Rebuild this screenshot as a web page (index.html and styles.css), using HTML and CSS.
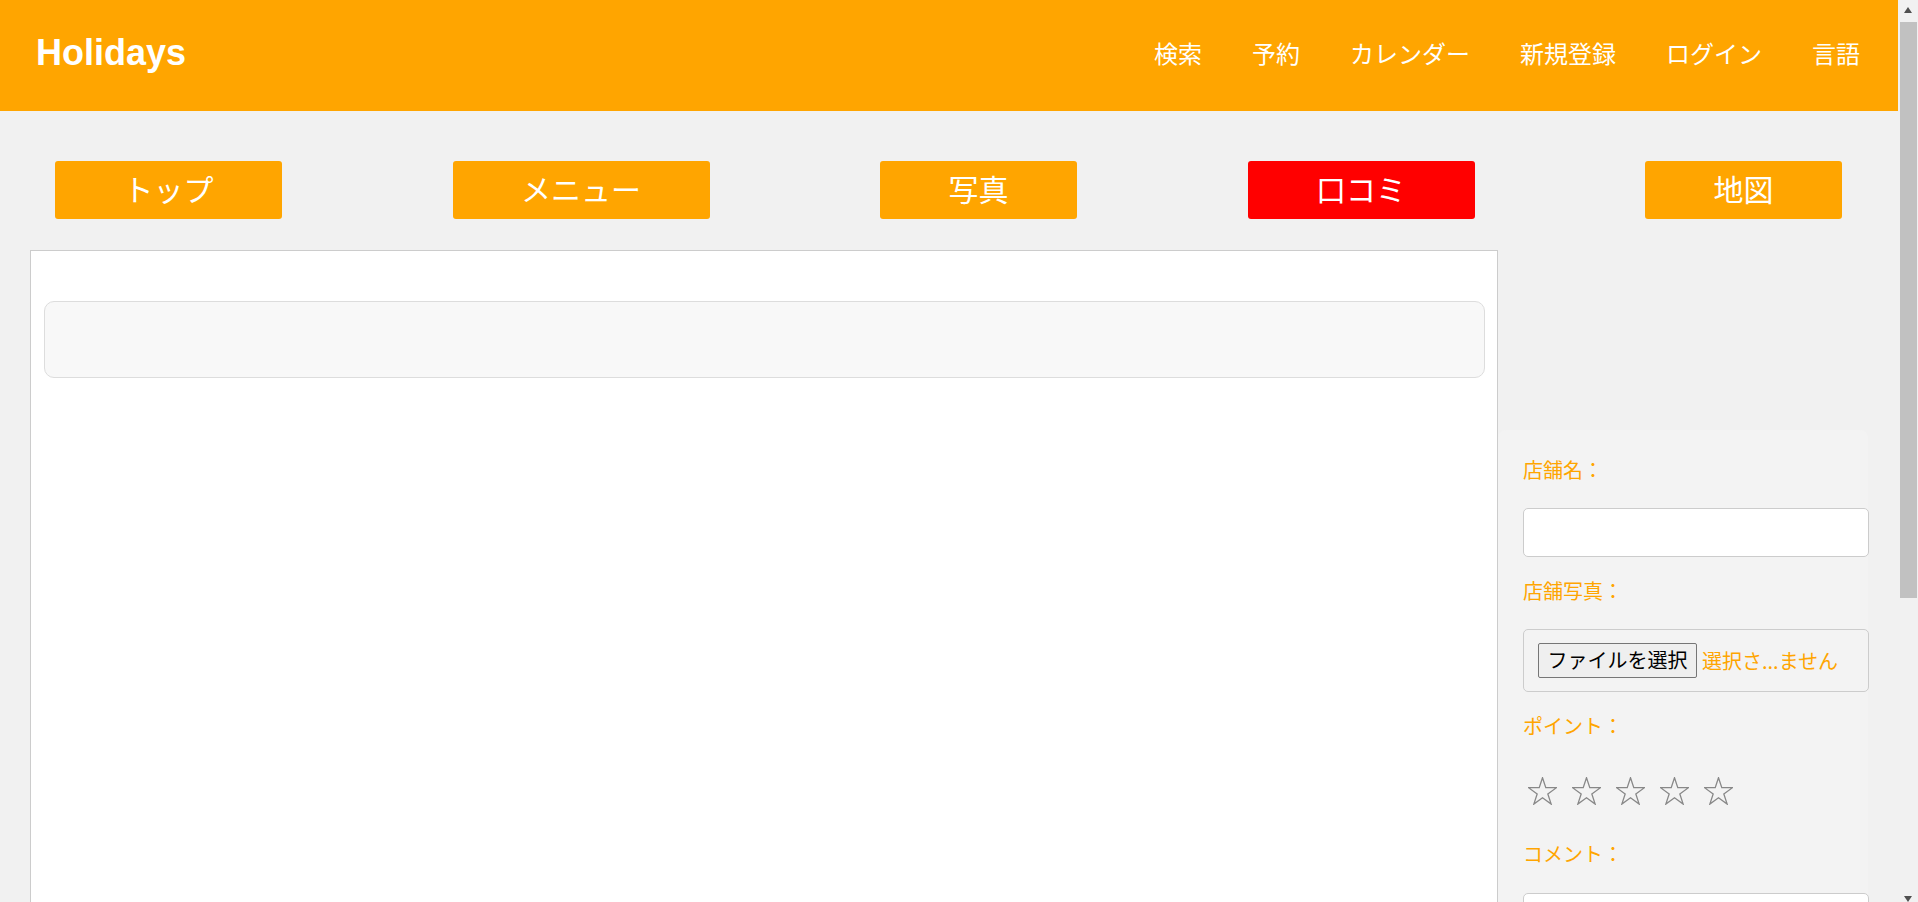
FILE: index.html
```html
<!DOCTYPE html>
<html lang="ja">
<head>
<meta charset="utf-8">
<title>Holidays</title>
<link rel="stylesheet" href="styles.css">
</head>
<body>
<div class="page">
  <header class="topbar">
    <div class="logo">Holidays</div>
    <nav class="nav">
      <a class="nav-link" href="#">検索</a>
      <a class="nav-link" href="#">予約</a>
      <a class="nav-link" href="#">カレンダー</a>
      <a class="nav-link" href="#">新規登録</a>
      <a class="nav-link" href="#">ログイン</a>
      <a class="nav-link" href="#">言語</a>
    </nav>
  </header>

  <div class="tabs">
    <a class="tab" href="#">トップ</a>
    <a class="tab" href="#">メニュー</a>
    <a class="tab" href="#">写真</a>
    <a class="tab tab-active" href="#">口コミ</a>
    <a class="tab" href="#">地図</a>
  </div>

  <div class="content">
    <main class="panel">
      <div class="search-box"></div>
    </main>
    <aside class="sidebar">
      <form class="review-form">
        <div class="label">店舗名：</div>
        <input class="text-input" type="text">
        <div class="label label-gap">店舗写真：</div>
        <div class="file-box">
          <span class="file-button">ファイルを選択</span>
          <span class="file-status">選択さ...ません</span>
        </div>
        <div class="label label-gap">ポイント：</div>
        <div class="stars">
          <svg class="star" viewBox="0 0 29 28"><polygon points="14.5,0.7 17.79,10.67 28.48,10.66 19.83,16.93 23.14,27.09 14.5,20.8 5.86,27.09 9.17,16.93 0.52,10.66 11.21,10.67"/></svg>
          <svg class="star" viewBox="0 0 29 28"><polygon points="14.5,0.7 17.79,10.67 28.48,10.66 19.83,16.93 23.14,27.09 14.5,20.8 5.86,27.09 9.17,16.93 0.52,10.66 11.21,10.67"/></svg>
          <svg class="star" viewBox="0 0 29 28"><polygon points="14.5,0.7 17.79,10.67 28.48,10.66 19.83,16.93 23.14,27.09 14.5,20.8 5.86,27.09 9.17,16.93 0.52,10.66 11.21,10.67"/></svg>
          <svg class="star" viewBox="0 0 29 28"><polygon points="14.5,0.7 17.79,10.67 28.48,10.66 19.83,16.93 23.14,27.09 14.5,20.8 5.86,27.09 9.17,16.93 0.52,10.66 11.21,10.67"/></svg>
          <svg class="star" viewBox="0 0 29 28"><polygon points="14.5,0.7 17.79,10.67 28.48,10.66 19.83,16.93 23.14,27.09 14.5,20.8 5.86,27.09 9.17,16.93 0.52,10.66 11.21,10.67"/></svg>
        </div>
        <div class="label label-comment">コメント：</div>
        <textarea class="comment"></textarea>
      </form>
    </aside>
  </div>
</div>

<div class="scrollbar">
  <div class="arrow-up"></div>
  <div class="thumb"></div>
  <div class="arrow-down"></div>
</div>
</body>
</html>
```

FILE: styles.css
```css
html, body {
  margin: 0;
  padding: 0;
  height: 902px;
  overflow: hidden;
}

body {
  background: #f1f1f1;
  font-family: "Noto Sans CJK JP", "Noto Sans", sans-serif;
}

.page {
  width: 1898px;
}

/* ---------- header ---------- */
.topbar {
  height: 111px;
  box-sizing: border-box;
  background: #ffa500;
  display: flex;
  align-items: center;
  justify-content: space-between;
  padding: 0 38px 6px 36px;
}

.logo {
  font-family: "Liberation Sans", Arial, sans-serif;
  font-weight: bold;
  font-size: 36px;
  color: #ffffff;
}

.nav {
  display: flex;
  gap: 50px;
}

.nav-link {
  color: #ffffff;
  font-size: 24px;
  text-decoration: none;
}

/* ---------- tabs ---------- */
.tabs {
  display: flex;
  gap: 170.5px;
  margin-top: 50px;
  padding-left: 55px;
}

.tab {
  display: block;
  height: 58px;
  box-sizing: border-box;
  padding: 0 68.5px 4px;
  line-height: 54px;
  font-size: 30px;
  color: #ffffff;
  background: #ffa500;
  border-radius: 3px;
  text-decoration: none;
  white-space: nowrap;
}

.tab-active {
  background: #ff0000;
}

/* ---------- content ---------- */
.content {
  display: flex;
  align-items: flex-start;
  margin-top: 31px;
  padding-left: 30px;
}

.panel {
  width: 1468px;
  height: 900px;
  box-sizing: border-box;
  background: #ffffff;
  border: 1px solid #cccccc;
  padding: 50px 12px 0 13px;
}

.search-box {
  height: 77px;
  box-sizing: border-box;
  background: #f8f8f8;
  border: 1px solid #dddddd;
  border-radius: 10px;
}

.sidebar {
  margin-top: 180px;
}

.review-form {
  width: 370px;
  height: 600px;
  box-sizing: border-box;
  background: #f3f3f3;
  border-radius: 8px;
  padding: 25px 0 0 25px;
  margin: 0;
}

.label {
  font-size: 20px;
  line-height: 30px;
  color: #ffa500;
}

.label-gap {
  margin-top: 19px;
}

.text-input {
  display: block;
  width: 346px;
  height: 49px;
  box-sizing: border-box;
  margin: 23px 0 0;
  border: 1px solid #cccccc;
  border-radius: 5px;
  background: #ffffff;
}

.file-box {
  display: flex;
  align-items: center;
  width: 346px;
  height: 63px;
  box-sizing: border-box;
  margin-top: 23px;
  padding: 0 0 0 14px;
  border: 1px solid #cccccc;
  border-radius: 5px;
}

.file-button {
  display: block;
  height: 35px;
  box-sizing: border-box;
  padding: 0 8.5px;
  line-height: 31px;
  font-size: 20px;
  color: #000000;
  background: #efefef;
  border: 1px solid #767676;
  border-radius: 2px;
  white-space: nowrap;
}

.file-status {
  margin-left: 5px;
  font-size: 20px;
  color: #ffa500;
  white-space: nowrap;
}

.stars {
  display: flex;
  gap: 15px;
  margin-top: 36px;
  padding-left: 5px;
  height: 28px;
}

.star {
  width: 29px;
  height: 28px;
  fill: none;
  stroke: #888888;
  stroke-width: 1.3;
  stroke-linejoin: miter;
}

.label-comment {
  margin-top: 34px;
}

.comment {
  display: block;
  width: 346px;
  height: 120px;
  box-sizing: border-box;
  margin-top: 24px;
  border: 1px solid #cccccc;
  border-radius: 5px;
  background: #ffffff;
  resize: none;
}

/* ---------- fake scrollbar ---------- */
.scrollbar {
  position: fixed;
  top: 0;
  right: 0;
  width: 20px;
  height: 902px;
  background: #f1f1f1;
}

.arrow-up {
  position: absolute;
  top: 7px;
  left: 6px;
  width: 0;
  height: 0;
  border-left: 4.5px solid transparent;
  border-right: 4.5px solid transparent;
  border-bottom: 6px solid #505050;
}

.thumb {
  position: absolute;
  top: 22px;
  left: 2px;
  width: 17px;
  height: 576px;
  background: #c1c1c1;
}

.arrow-down {
  position: absolute;
  bottom: 0;
  left: 6px;
  width: 0;
  height: 0;
  border-left: 4.5px solid transparent;
  border-right: 4.5px solid transparent;
  border-top: 6px solid #505050;
}
```
